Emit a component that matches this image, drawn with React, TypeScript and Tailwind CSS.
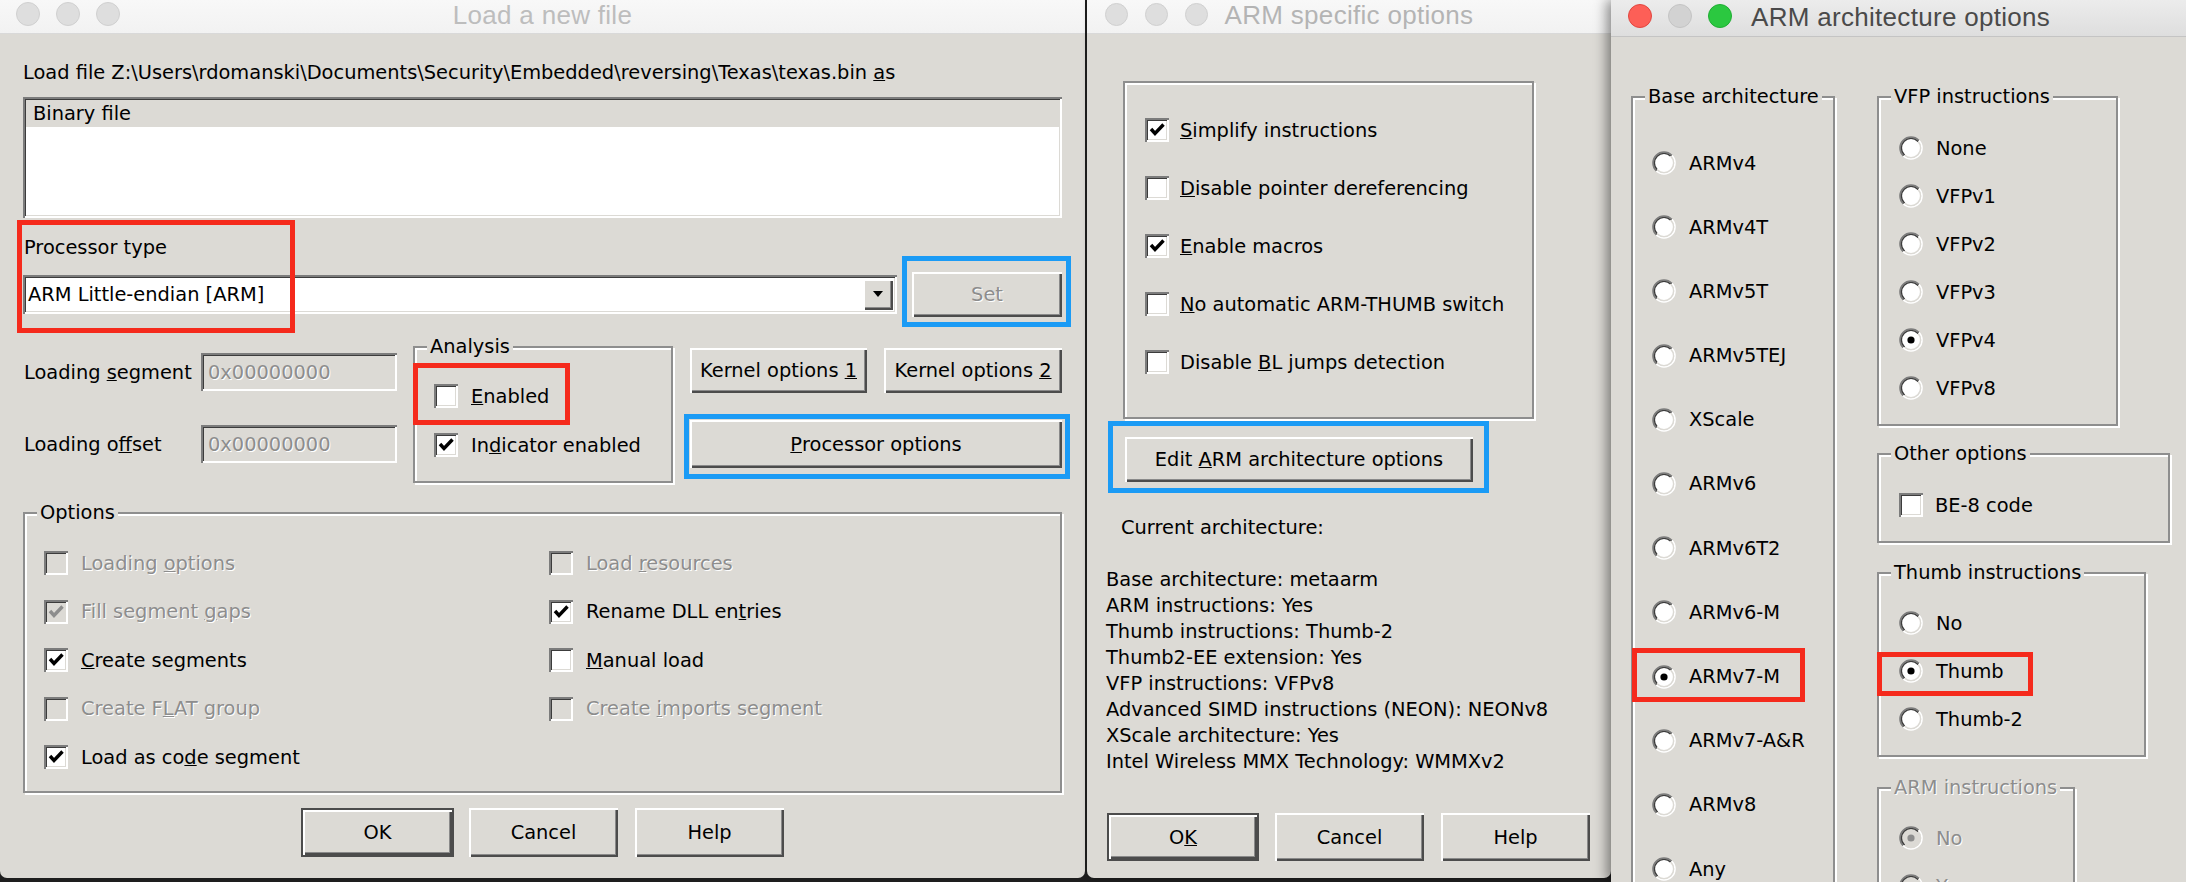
import React from "react";

const SUNKEN =
  "shadow-[inset_2px_2px_0_#7c7c7c,inset_-2px_-2px_0_#ffffff,inset_3px_3px_0_#3c3c3c,inset_-3px_-3px_0_#dcdad5]";
const RAISED =
  "shadow-[inset_2px_2px_0_#ffffff,inset_-2px_-2px_0_#4c4c4c,inset_-3px_-3px_0_#8a8a8a]";
const RAISED_DEFAULT =
  "shadow-[inset_0_0_0_2px_#4c4c4c,inset_4px_4px_0_#ffffff,inset_-4px_-4px_0_#4c4c4c,inset_-5px_-5px_0_#8a8a8a]";
const DIS = "text-[#8d8d8d] [text-shadow:1px_1px_0_#ffffff]";
const TITLE_FONT = "[font-family:'Liberation_Sans',Arial,sans-serif] text-[26px] leading-[30px] tracking-[0.3px]";

function Check({ checked = false, disabled = false }: { checked?: boolean; disabled?: boolean }) {
  return (
    <span className={`block h-[24px] w-[24px] shrink-0 ${SUNKEN} ${disabled ? "bg-[#dcdad5]" : "bg-white"}`}>
      {checked && (
        <svg className="block" width="24" height="24" viewBox="0 0 24 24">
          <path d="M6 11 L10 15.5 L18.5 6.5" fill="none" stroke={disabled ? "#8d8d8d" : "#000"} strokeWidth="3.4" />
        </svg>
      )}
    </span>
  );
}

function Radio({ on = false, disabled = false }: { on?: boolean; disabled?: boolean }) {
  return (
    <svg className="block shrink-0" width="24" height="24" viewBox="0 0 24 24">
      <defs>
        <linearGradient id="rado" x1="0" y1="0" x2="1" y2="1">
          <stop offset="0.5" stopColor="#7c7c7c" />
          <stop offset="0.5" stopColor="#ffffff" />
        </linearGradient>
        <linearGradient id="radi" x1="0" y1="0" x2="1" y2="1">
          <stop offset="0.5" stopColor="#3c3c3c" />
          <stop offset="0.5" stopColor="#dcdad5" />
        </linearGradient>
      </defs>
      <circle cx="12" cy="12" r="9.5" fill={disabled ? "#dcdad5" : "#fff"} />
      <circle cx="12" cy="12" r="11" fill="none" stroke="url(#rado)" strokeWidth="1.6" />
      <circle cx="12" cy="12" r="9.6" fill="none" stroke="url(#radi)" strokeWidth="1.4" />
      {on && <circle cx="12" cy="12" r="3.6" fill={disabled ? "#8d8d8d" : "#000"} />}
    </svg>
  );
}

function Btn({
  children,
  className = "",
  def = false,
  disabled = false,
}: {
  children?: React.ReactNode;
  className?: string;
  def?: boolean;
  disabled?: boolean;
}) {
  return (
    <div
      className={`flex shrink-0 items-center justify-center whitespace-nowrap bg-[#dcdad5] ${def ? RAISED_DEFAULT : RAISED} ${disabled ? DIS : ""} ${className}`}
    >
      {children}
    </div>
  );
}

function Group({
  title,
  disabled = false,
  className = "",
  children,
}: {
  title?: string;
  disabled?: boolean;
  className?: string;
  children?: React.ReactNode;
}) {
  return (
    <div className={`flex shrink-0 flex-col border-2 border-[#8e8e8e] shadow-[inset_2px_2px_0_#ffffff,2px_2px_0_#ffffff] ${className}`}>
      {title && (
        <span className={`-mt-[13px] ml-[12px] h-[23px] w-fit whitespace-nowrap bg-[#dcdad5] px-[3px] ${disabled ? DIS : ""}`}>
          {title}
        </span>
      )}
      {children}
    </div>
  );
}

function CheckRow({
  label,
  checked,
  disabled,
  gap = "ml-[13px]",
}: {
  label: React.ReactNode;
  checked?: boolean;
  disabled?: boolean;
  gap?: string;
}) {
  return (
    <div className="flex h-[24px] items-center whitespace-nowrap">
      <Check checked={checked} disabled={disabled} />
      <span className={`${gap} ${disabled ? DIS : ""}`}>{label}</span>
    </div>
  );
}

function RadioRow({ label, on, disabled }: { label: string; on?: boolean; disabled?: boolean }) {
  return (
    <div className="flex h-[24px] items-center whitespace-nowrap">
      <Radio on={on} disabled={disabled} />
      <span className={`ml-[13px] ${disabled ? DIS : ""}`}>{label}</span>
    </div>
  );
}

function Lights({ active = false, size, gap }: { active?: boolean; size: string; gap: string }) {
  const dot = `${size} rounded-full border`;
  return (
    <div className={`flex ${gap}`}>
      <span className={`${dot} ${active ? "border-[#e1463f] bg-[#fd5f57]" : "border-[#d0d0d0] bg-[#dedede]"}`} />
      <span className={`${dot} ${active ? "border-[#c4c4c4] bg-[#d2d2d2]" : "border-[#d0d0d0] bg-[#dedede]"}`} />
      <span className={`${dot} ${active ? "border-[#1fae33] bg-[#2bc840]" : "border-[#d0d0d0] bg-[#dedede]"}`} />
    </div>
  );
}

function Annot({ className }: { className: string }) {
  return <div className={`pointer-events-none absolute border-[5px] ${className}`} />;
}

const LOAD_PATH = "Load file Z:\\Users\\rdomanski\\Documents\\Security\\Embedded\\reversing\\Texas\\texas.bin ";

function LoadWindow() {
  const field = `flex h-[38px] w-[196px] items-center pl-[7px] ${SUNKEN} ${DIS}`;
  return (
    <div className="relative flex h-[878px] w-[1085px] shrink-0 flex-col overflow-hidden rounded-b-[7px] bg-[#dcdad5]">
      <div className="grid h-[34px] shrink-0 grid-cols-[1fr_auto_1fr] items-start border-b border-[#d9d9d9] bg-linear-to-b from-[#f8f8f8] to-[#f2f2f2]">
        <div className="pl-[16px] pt-[2px]">
          <Lights size="h-[24px] w-[24px]" gap="gap-[16px]" />
        </div>
        <span className={`${TITLE_FONT} text-[#bdbdbd]`}>Load a new file</span>
        <span />
      </div>

      <div className="flex flex-col px-[23px]">
        <div className="mt-[27px] h-[23px] whitespace-nowrap">
          {LOAD_PATH}
          <u>a</u>s
        </div>

        <div className={`mt-[13px] h-[121px] bg-white p-[3px] ${SUNKEN}`}>
          <div className="h-[27px] bg-[#dcdad5] pl-[7px] leading-[27px]">Binary file</div>
        </div>

        <div className="mt-[18px] h-[23px] pl-[1px]">Processor type</div>

        <div className="mt-[13px] flex h-[45px] items-center">
          <div className={`flex h-[39px] w-[874px] items-center bg-white p-[4px] ${SUNKEN}`}>
            <span className="flex-1 pl-[1px]">ARM Little-endian [ARM]</span>
            <Btn className="h-[31px] w-[30px]">
              <svg width="12" height="7" viewBox="0 0 12 7">
                <path d="M1 0 H11 L6 6 Z" fill="#000" />
              </svg>
            </Btn>
          </div>
          <Btn disabled className="ml-auto h-[45px] w-[150px]">
            Set
          </Btn>
        </div>

        <div className="mt-[28px] flex h-[138px] items-start">
          <div className="flex w-[374px] shrink-0 flex-col">
            <div className="mt-[8px] flex h-[38px] items-center justify-between">
              <span className="pl-[1px]">
                Loading <u>s</u>egment
              </span>
              <div className={field}>0x00000000</div>
            </div>
            <div className="mt-[34px] flex h-[38px] items-center justify-between">
              <span className="pl-[1px]">
                Loading o<u>f</u>fset
              </span>
              <div className={field}>0x00000000</div>
            </div>
          </div>

          <Group title="Analysis" className="ml-[16px] mt-[1px] h-[137px] w-[260px]">
            <div className="mt-[26px] pl-[19px]">
              <CheckRow
                label={
                  <>
                    <u>E</u>nabled
                  </>
                }
              />
            </div>
            <div className="mt-[25px] pl-[19px]">
              <CheckRow
                checked
                label={
                  <>
                    In<u>d</u>icator enabled
                  </>
                }
              />
            </div>
          </Group>

          <div className="ml-[17px] flex w-[372px] flex-col">
            <div className="mt-[3px] flex gap-[17px]">
              <Btn className="h-[45px] w-[177px]">
                Kernel options&nbsp;<u>1</u>
              </Btn>
              <Btn className="h-[45px] w-[178px]">
                Kernel options&nbsp;<u>2</u>
              </Btn>
            </div>
            <Btn className="mt-[27px] h-[48px] w-full">
              <u>P</u>rocessor options
            </Btn>
          </div>
        </div>

        <Group title="Options" className="mt-[29px] h-[281px]">
          <div className="mt-[15px] grid grid-cols-[505px_1fr] auto-rows-[48.5px] items-center pl-[19px]">
            <CheckRow
              disabled
              label={
                <>
                  Loading <u>o</u>ptions
                </>
              }
            />
            <CheckRow
              disabled
              label={
                <>
                  Load <u>r</u>esources
                </>
              }
            />
            <CheckRow
              disabled
              checked
              label={
                <>
                  Fill segment <u>g</u>aps
                </>
              }
            />
            <CheckRow
              checked
              label={
                <>
                  Rename DLL en<u>t</u>ries
                </>
              }
            />
            <CheckRow
              checked
              label={
                <>
                  <u>C</u>reate segments
                </>
              }
            />
            <CheckRow
              label={
                <>
                  <u>M</u>anual load
                </>
              }
            />
            <CheckRow
              disabled
              label={
                <>
                  Create F<u>L</u>AT group
                </>
              }
            />
            <CheckRow
              disabled
              label={
                <>
                  Create <u>i</u>mports segment
                </>
              }
            />
            <CheckRow
              checked
              label={
                <>
                  Load as co<u>d</u>e segment
                </>
              }
            />
          </div>
        </Group>

        <div className="mt-[15px] flex justify-center">
          <Btn def className="h-[49px] w-[153px]">
            OK
          </Btn>
          <Btn className="ml-[15px] h-[49px] w-[149px]">Cancel</Btn>
          <Btn className="ml-[17px] h-[49px] w-[149px]">Help</Btn>
        </div>
      </div>

      <Annot className="left-[17px] top-[220px] h-[113px] w-[278px] border-[#f52a1c]" />
      <Annot className="left-[902px] top-[256px] h-[71px] w-[169px] border-[#1b9bf5]" />
      <Annot className="left-[413px] top-[363px] h-[62px] w-[157px] border-[#f52a1c]" />
      <Annot className="left-[684px] top-[414px] h-[65px] w-[386px] border-[#1b9bf5]" />
    </div>
  );
}

const ARM_INFO = [
  "Base architecture: metaarm",
  "ARM instructions: Yes",
  "Thumb instructions: Thumb-2",
  "Thumb2-EE extension: Yes",
  "VFP instructions: VFPv8",
  "Advanced SIMD instructions (NEON): NEONv8",
  "XScale architecture: Yes",
  "Intel Wireless MMX Technology: WMMXv2",
];

function ArmWindow() {
  return (
    <div className="relative ml-[2px] flex h-[878px] w-[524px] shrink-0 flex-col overflow-hidden rounded-b-[7px] bg-[#dcdad5] shadow-[2px_0_6px_rgba(0,0,0,0.3)]">
      <div className="grid h-[34px] shrink-0 grid-cols-[1fr_auto_1fr] items-start border-b border-[#d9d9d9] bg-linear-to-b from-[#f8f8f8] to-[#f2f2f2]">
        <div className="pl-[18px] pt-[3px]">
          <Lights size="h-[23px] w-[23px]" gap="gap-[17px]" />
        </div>
        <span className={`${TITLE_FONT} text-[#b4b4b4]`}>ARM specific options</span>
        <span />
      </div>

      <div className="flex flex-col">
        <Group className="ml-[36px] mt-[47px] h-[338px] w-[411px]">
          <div className="mt-[35px] flex flex-col gap-[34px] pl-[20px]">
            <CheckRow
              checked
              gap="ml-[11px]"
              label={
                <>
                  <u>S</u>implify instructions
                </>
              }
            />
            <CheckRow
              gap="ml-[11px]"
              label={
                <>
                  <u>D</u>isable pointer dereferencing
                </>
              }
            />
            <CheckRow
              checked
              gap="ml-[11px]"
              label={
                <>
                  <u>E</u>nable macros
                </>
              }
            />
            <CheckRow
              gap="ml-[11px]"
              label={
                <>
                  <u>N</u>o automatic ARM-THUMB switch
                </>
              }
            />
            <CheckRow
              gap="ml-[11px]"
              label={
                <>
                  Disable <u>B</u>L jumps detection
                </>
              }
            />
          </div>
        </Group>

        <Btn className="ml-[38px] mt-[18px] h-[45px] w-[348px]">
          Edit&nbsp;<u>A</u>RM architecture options
        </Btn>

        <div className="ml-[34px] mt-[34px] h-[24px] leading-[24px]">Current architecture:</div>

        <div className="ml-[19px] mt-[27px] flex flex-col leading-[26px]">
          {ARM_INFO.map((line) => (
            <span key={line} className="whitespace-nowrap">
              {line}
            </span>
          ))}
        </div>

        <div className="ml-[20px] mt-[38px] flex">
          <Btn def className="h-[48px] w-[152px]">
            O<u>K</u>
          </Btn>
          <Btn className="ml-[16px] h-[48px] w-[149px]">Cancel</Btn>
          <Btn className="ml-[17px] h-[48px] w-[149px]">Help</Btn>
        </div>
      </div>

      <Annot className="left-[21px] top-[421px] h-[72px] w-[381px] border-[#1b9bf5]" />
    </div>
  );
}

const BASE_ARCH = [
  "ARMv4",
  "ARMv4T",
  "ARMv5T",
  "ARMv5TEJ",
  "XScale",
  "ARMv6",
  "ARMv6T2",
  "ARMv6-M",
  "ARMv7-M",
  "ARMv7-A&R",
  "ARMv8",
  "Any",
];

const VFP = ["None", "VFPv1", "VFPv2", "VFPv3", "VFPv4", "VFPv8"];

function ArchWindow() {
  return (
    <div className="relative flex h-[882px] w-[575px] shrink-0 flex-col overflow-hidden bg-[#dcdad5] shadow-[-4px_0_12px_rgba(0,0,0,0.45)]">
      <div className="flex h-[37px] shrink-0 items-start border-b border-[#c4c4c4] bg-linear-to-b from-[#ececec] to-[#dedede] pl-[17px]">
        <div className="pt-[4px]">
          <Lights active size="h-[24px] w-[24px]" gap="gap-[16px]" />
        </div>
        <span className={`ml-[19px] mt-[2px] ${TITLE_FONT} text-[#4a4a4a]`}>ARM architecture options</span>
      </div>

      <div className="flex items-start">
        <Group title="Base architecture" className="ml-[20px] mt-[59px] h-[820px] w-[204px]">
          <div className="mt-[43px] flex flex-col gap-[40.2px] pl-[19px]">
            {BASE_ARCH.map((a) => (
              <RadioRow key={a} label={a} on={a === "ARMv7-M"} />
            ))}
          </div>
        </Group>

        <div className="ml-[42px] flex flex-col">
          <Group title="VFP instructions" className="mt-[59px] h-[330px] w-[241px]">
            <div className="mt-[28px] flex flex-col gap-[24px] pl-[20px]">
              {VFP.map((v) => (
                <RadioRow key={v} label={v} on={v === "VFPv4"} />
              ))}
            </div>
          </Group>

          <Group title="Other options" className="mt-[27px] h-[90px] w-[293px]">
            <div className="mt-[28px] pl-[20px]">
              <CheckRow label="BE-8 code" gap="ml-[12px]" />
            </div>
          </Group>

          <Group title="Thumb instructions" className="mt-[29px] h-[185px] w-[269px]">
            <div className="mt-[27px] flex flex-col gap-[24px] pl-[20px]">
              <RadioRow label="No" />
              <RadioRow label="Thumb" on />
              <RadioRow label="Thumb-2" />
            </div>
          </Group>

          <Group title="ARM instructions" disabled className="mt-[30px] h-[200px] w-[198px]">
            <div className="mt-[27px] flex flex-col gap-[24px] pl-[20px]">
              <RadioRow label="No" on disabled />
              <RadioRow label="Yes" disabled />
            </div>
          </Group>
        </div>
      </div>

      <Annot className="left-[21px] top-[648px] h-[54px] w-[173px] border-[#f52a1c]" />
      <Annot className="left-[266px] top-[652px] h-[44px] w-[156px] border-[#f52a1c]" />
    </div>
  );
}

export default function App() {
  return (
    <div className="flex h-[882px] w-[2186px] overflow-hidden bg-[#1e1e1e] text-[19.4px] leading-[23px] text-black [font-family:'DejaVu_Sans',sans-serif]">
      <LoadWindow />
      <ArmWindow />
      <ArchWindow />
    </div>
  );
}
